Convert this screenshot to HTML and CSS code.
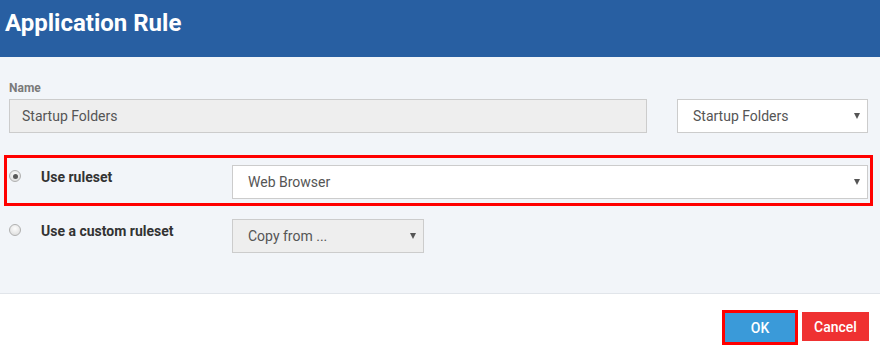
FILE: index.html
```html
<!DOCTYPE html>
<html lang="en">
<head>
    <meta charset="UTF-8">
    <meta name="viewport" content="width=device-width, initial-scale=1.0">
    <title>Application Rule</title>
    <link rel="stylesheet" href="styles.css">
</head>
<body>

<div class="dialog">
    <div class="dialog-header">
        <h1>Application Rule</h1>
    </div>

    <div class="dialog-body">
        <label class="field-label">Name</label>
        <div class="name-row">
            <div class="text-input">Startup Folders</div>
            <div class="select name-select">Startup Folders<span class="caret"></span></div>
        </div>

        <div class="rule-row highlighted">
            <span class="radio checked"></span>
            <span class="rule-label">Use ruleset</span>
            <div class="select wide-select">Web Browser<span class="caret"></span></div>
        </div>

        <div class="rule-row">
            <span class="radio"></span>
            <span class="rule-label">Use a custom ruleset</span>
            <div class="select copy-select">Copy from ...<span class="caret"></span></div>
        </div>
    </div>

    <div class="dialog-footer">
        <button class="btn btn-ok">OK</button>
        <button class="btn btn-cancel">Cancel</button>
    </div>
</div>

</body>
</html>
```

FILE: styles.css
```css
html, body {
    margin: 0;
    padding: 0;
    height: 100%;
    font-family: Roboto, "Liberation Sans", Arial, sans-serif;
}
.dialog {
    width: 880px;
    height: 356px;
    display: flex;
    flex-direction: column;
    background: #fff;
}
.dialog-header {
    height: 57px;
    box-sizing: border-box;
    padding: 8px 5px 0;
    background: #285fa2;
}
.dialog-header h1 {
    margin: 0;
    font-size: 24px;
    line-height: 31px;
    font-weight: 700;
    color: #fff;
}
.dialog-body {
    background: #f2f5f9;
    padding: 24px 12px 33px 9px;
    border-bottom: 1px solid #e1e5ea;
}
.field-label {
    display: block;
    font-size: 12px;
    line-height: 14px;
    font-weight: 700;
    color: #7a7a7a;
    margin-bottom: 4px;
}
.name-row {
    display: flex;
    gap: 30px;
    margin-bottom: 22px;
}
.text-input, .select {
    position: relative;
    box-sizing: border-box;
    height: 34px;
    line-height: 32px;
    padding: 0 12px;
    border: 1px solid #cccccc;
    font-size: 14px;
    color: #555;
    background: #fff;
}
.select {
    padding-left: 15px;
}
.text-input {
    flex: 1;
    background: #eeeeee;
}
.name-select {
    width: 191px;
}
.caret {
    position: absolute;
    right: 7px;
    top: 13px;
    width: 0;
    height: 0;
    border-left: 3px solid transparent;
    border-right: 3px solid transparent;
    border-top: 6px solid #555;
}
.rule-row {
    display: grid;
    grid-template-columns: 32px 191px 1fr;
    align-items: start;
    margin: 3px -5px 0;
    padding: 7px 2px 4px;
    border: 3px solid transparent;
}
.rule-row.highlighted {
    margin-top: 0;
    border-color: #ff0000;
}
.radio {
    box-sizing: border-box;
    width: 12px;
    height: 12px;
    margin: 5px 0 0 0;
    border-radius: 50%;
    border: 1px solid #b0b0b0;
    background: radial-gradient(circle at 50% 35%, #fdfdfd, #d8d8d8);
    position: relative;
}
.radio.checked::after {
    content: "";
    position: absolute;
    left: 2.5px;
    top: 2.5px;
    width: 5px;
    height: 5px;
    border-radius: 50%;
    background: #595959;
}
.rule-label {
    font-size: 14px;
    line-height: 24px;
    font-weight: 700;
    color: #333;
}
.wide-select {
    width: 100%;
}
.copy-select {
    width: 192px;
    background: #eeeeee;
}
.dialog-footer {
    flex: 1;
    display: flex;
    justify-content: flex-end;
    align-items: flex-start;
    gap: 7px;
    padding: 18px 11px 0 0;
}
.btn {
    height: 29px;
    border: none;
    padding: 0;
    font-family: inherit;
    font-size: 14px;
    font-weight: 500;
    color: #fff;
}
.btn-ok {
    width: 70px;
    background: #3a9ad9;
    outline: 3px solid #ff0000;
    margin-top: 1px;
}
.btn-cancel {
    width: 67px;
    background: #ef3131;
}
```
